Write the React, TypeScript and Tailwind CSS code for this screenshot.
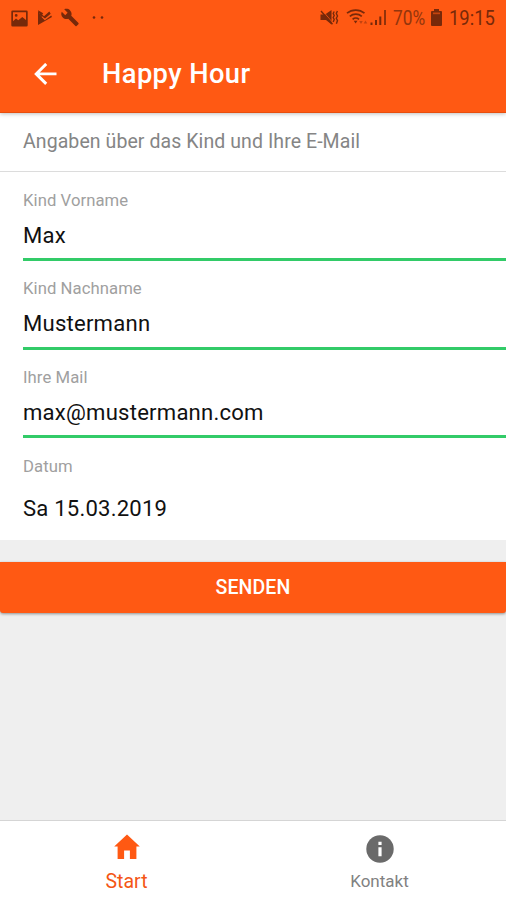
interface FieldProps {
  label: string;
  value: string;
  type?: string;
  className: string;
}

function Field({ label, value, type = "text", className }: FieldProps) {
  return (
    <label className={`ml-[23px] block border-b-[3px] border-[#32cb68] ${className}`}>
      <span className="block text-[16.7px] leading-[22px] tracking-[0.06px] text-[#a0a0a0]">{label}</span>
      <input
        type={type}
        defaultValue={value}
        className="mt-[8px] block h-[30px] w-full bg-transparent text-[22.1px] leading-[30px] tracking-[0.22px] text-[#111] outline-none"
      />
    </label>
  );
}

function StatusBar() {
  return (
    <div className="flex h-[36px] items-center text-[#77290a]">
      {/* notifications */}
      <svg className="ml-[11px] h-[17px] w-[17px]" viewBox="0 0 17 17" fill="currentColor">
        <path
          fillRule="evenodd"
          d="M1.5 0.5h14a1.2 1.2 0 0 1 1.2 1.2v13.6a1.2 1.2 0 0 1-1.2 1.2h-14a1.2 1.2 0 0 1-1.2-1.2V1.7A1.2 1.2 0 0 1 1.5.5zM2 2.2v9l3-2.7 2.3 1.8 4-3.4L15 10V2.2zM5.2 4a1.4 1.4 0 1 1 0 2.8 1.4 1.4 0 0 1 0-2.8z"
        />
      </svg>
      <svg className="mb-[1px] ml-[9px] h-[17px] w-[16px]" viewBox="0 0 16 17" fill="currentColor">
        <path d="M1 1.2l5.2 3L5.2 5.4 7 7.2l5.3-4.7 1.4 2.2L8 9.6 5 7.2l-1 1z" />
        <path d="M1 1.2l3 6.4 3.8 3.6 6.4-4.8L15 8 1 16z" />
      </svg>
      <svg className="mb-[1px] ml-[7px] h-[19px] w-[20px]" viewBox="0 0 24 24" fill="currentColor">
        <path d="M22.7 19l-9.1-9.1c.9-2.3.4-5-1.5-6.9-2-2-5-2.4-7.4-1.3L9 6 6 9 1.6 4.7C.4 7.1.9 10.1 2.9 12.1c1.9 1.9 4.6 2.4 6.9 1.5l9.1 9.1c.4.4 1 .4 1.4 0l2.3-2.3c.5-.4.5-1.1.1-1.4z" />
      </svg>
      <svg className="ml-[12px] h-[4px] w-[12px]" viewBox="0 0 12 4" fill="currentColor">
        <circle cx="2" cy="1.5" r="1.3" />
        <circle cx="10" cy="1.5" r="1.3" />
      </svg>

      {/* system */}
      <svg className="mb-[1px] ml-auto h-[17px] w-[19px]" viewBox="0 0 19 17" fill="currentColor">
        <path d="M0.5 5.5H5L11.5 1v14.5L6 11H0.5z" />
        <path d="M1.8 0.8l11 13" stroke="#ff5913" strokeWidth="0.8" />
        <path
          d="M1 2l11.5 13.2M14.2 2.5l-1 2 1 2-1 2 1 2-1 2.5M17.4 2l-1.1 2.5 1.2 2.5-1.2 2.2 1.2 2.4-1.1 3.2"
          fill="none"
          stroke="currentColor"
          strokeWidth="1.4"
        />
      </svg>
      <svg className="mb-[1px] ml-[7px] h-[17px] w-[22px]" viewBox="0 0 22 17" fill="none" stroke="currentColor">
        <path d="M1 4.2c5-4.2 12.5-4.2 17.5 0M3.8 7.4c3.5-3 8.5-3 12 0M6.6 10.3c1.8-1.6 4.6-1.6 6.4 0" strokeWidth="1.7" />
        <path d="M7.7 11.8h3.8L9.6 14.5z" fill="currentColor" stroke="none" />
        <path d="M13.2 12h3.6L15 15zM17.7 14.5h3.6L19.5 11.5z" fill="currentColor" stroke="none" opacity=".45" />
      </svg>
      <svg className="mb-[1px] ml-[2px] h-[17px] w-[18px]" viewBox="0 0 18 17" fill="currentColor">
        <path d="M0.5 13.5h2V16h-2zM5 11h2v5H5zM9.3 7.5h2V16h-2z" />
        <path d="M14 1h2v15h-2z" opacity=".8" />
      </svg>
      <span className="mt-[1px] ml-[5px] w-[35px] text-[19.5px] whitespace-nowrap">
        <span className="inline-block origin-left scale-x-[.89] text-[#93350d]">70%</span>
      </span>
      <svg className="mb-[1px] ml-[3px] h-[17px] w-[11px]" viewBox="0 0 11 17" fill="currentColor">
        <path d="M3 0h5v2h2a1 1 0 0 1 1 1v13a1 1 0 0 1-1 1H1a1 1 0 0 1-1-1V3a1 1 0 0 1 1-1h2z" />
        <path d="M2 3.5h7v1.7H2z" fill="#c6440e" />
      </svg>
      <span className="mr-[10px] ml-[7px] w-[47px] text-[20px] whitespace-nowrap">
        <span className="inline-block origin-left scale-x-[.92]">19:15</span>
      </span>
    </div>
  );
}

export default function App() {
  return (
    <div className="flex h-[900px] w-[506px] flex-col overflow-hidden bg-[#efefef] font-['Roboto','Liberation_Sans',sans-serif]">
      <header className="relative h-[113px] shrink-0 border-b border-[#e84e0d] bg-[#ff5913] shadow-[0_1px_4px_rgba(0,0,0,0.25)]">
        <StatusBar />
        <div className="flex h-[76px] items-center">
          <button className="ml-[34px]" aria-label="Zurück">
            <svg className="h-[23px] w-[23px]" viewBox="0 0 23 23" fill="none" stroke="white" strokeWidth="2.9">
              <path d="M22.5 10.9H2.2M12.2 0.9L2.2 10.9l10 10" />
            </svg>
          </button>
          <h1 className="mt-[1px] ml-[45px] text-[27.3px] font-medium tracking-[0.4px] text-white">Happy Hour</h1>
        </div>
      </header>

      <main className="flex-1">
        <section className="bg-white">
          <h2 className="h-[59px] border-b border-[#dcdcdc] pt-[17px] pl-[23px] text-[19.5px] leading-[24px] tracking-[0.08px] text-[#858585]">
            Angaben über das Kind und Ihre E-Mail
          </h2>
          <Field label="Kind Vorname" value="Max" className="h-[89px] pt-[18px]" />
          <Field label="Kind Nachname" value="Mustermann" className="h-[89px] pt-[17px]" />
          <Field label="Ihre Mail" value="max@mustermann.com" type="email" className="h-[88px] pt-[17px]" />
          <div className="h-[102px] pt-[18px] pl-[23px]">
            <div className="text-[16.7px] leading-[22px] tracking-[0.06px] text-[#a0a0a0]">Datum</div>
            <div className="mt-[15px] text-[22.1px] leading-[30px] tracking-[0.2px] text-[#111]">Sa 15.03.2019</div>
          </div>
        </section>

        <button className="mt-[22px] block h-[51px] w-full rounded-b-[3px] bg-[#ff5913] text-[19.5px] font-medium tracking-[0.1px] text-white shadow-[0_1px_3px_rgba(0,0,0,0.4)]">
          SENDEN
        </button>
      </main>

      <nav className="grid h-[80px] shrink-0 grid-cols-2 border-t border-[#d5d5d5] bg-white">
        <a className="flex flex-col items-center pt-[13px] text-[#f45615]">
          <svg className="h-[26px] w-[26px]" viewBox="0 0 26 26" fill="#ff5913">
            <path d="M13 0.4L0.2 12.6h3.4V25h6.5v-8.6h5.8V25h6.5V12.6h3.4z" />
          </svg>
          <span className="mt-[8px] text-[19.5px] leading-[28px]">Start</span>
        </a>
        <a className="flex flex-col items-center pt-[14px] text-[#818181]">
          <svg className="h-[28px] w-[28px]" viewBox="0 0 28 28">
            <circle cx="14" cy="14" r="13.7" fill="#6a6a6a" />
            <path d="M12.4 6.8h3.2V10h-3.2zM12.4 12.2h3.2v9h-3.2z" fill="white" />
          </svg>
          <span className="mt-[5px] text-[17px] leading-[26px]">Kontakt</span>
        </a>
      </nav>
    </div>
  );
}
